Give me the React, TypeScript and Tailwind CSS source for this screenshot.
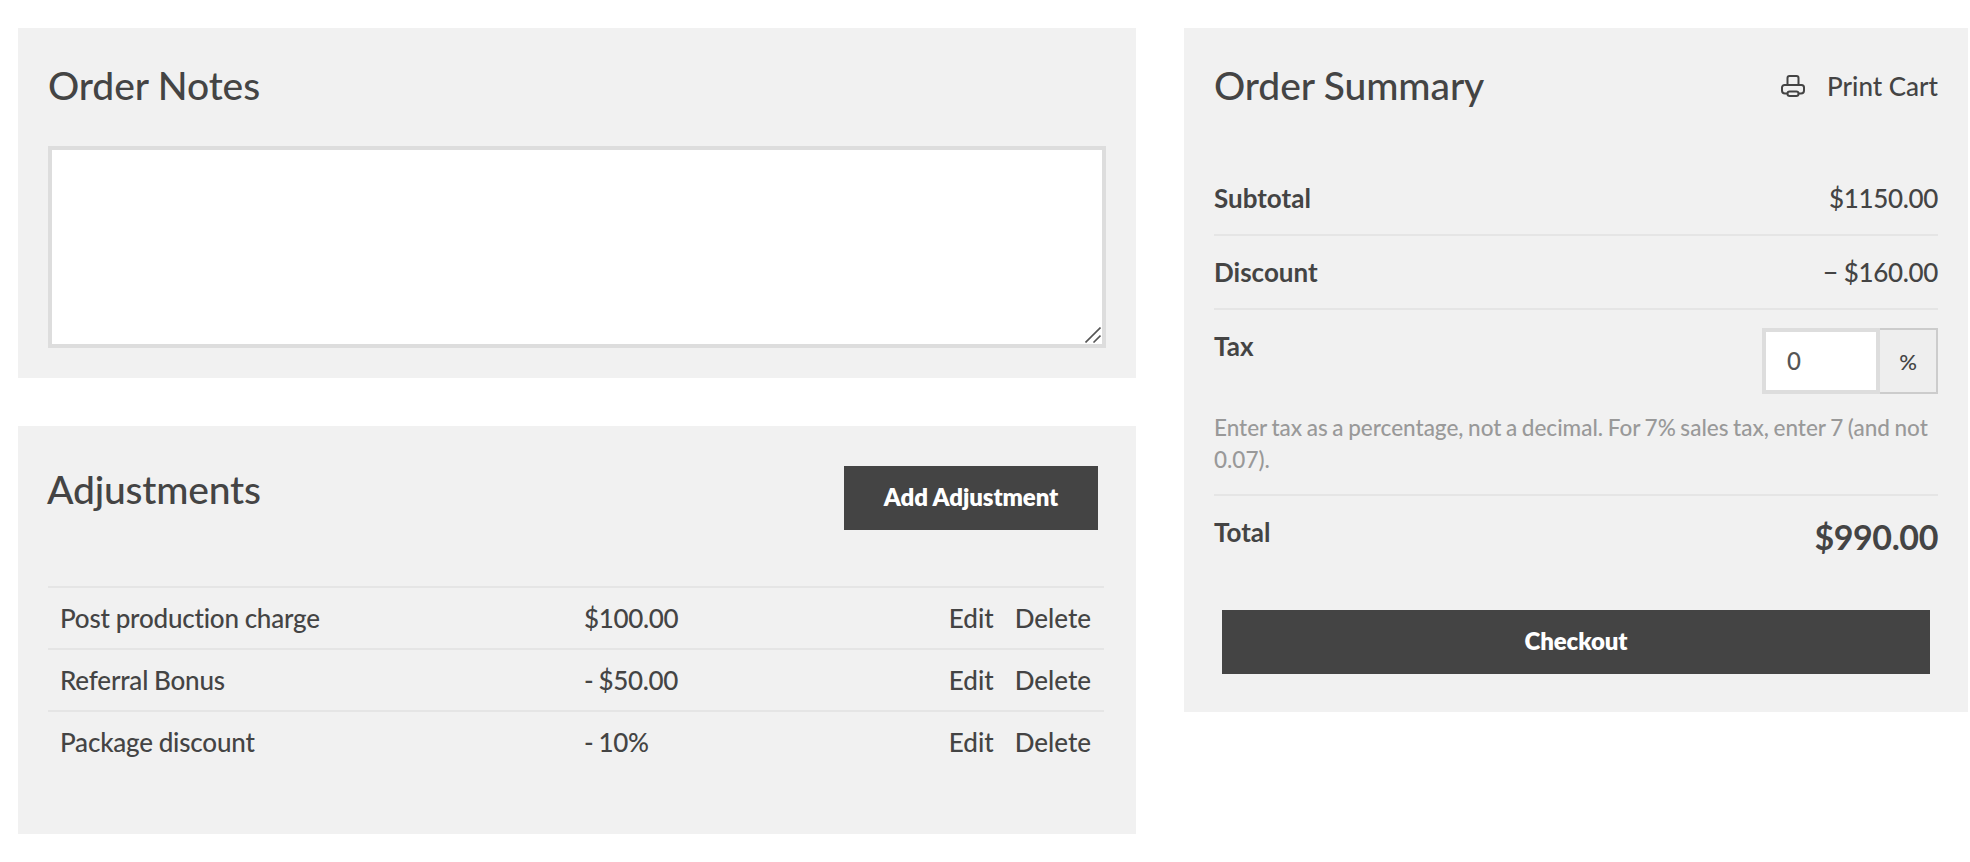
import { useState } from 'react';

const adjustments = [
  { id: 1, label: 'Post production charge', amount: '$100.00' },
  { id: 2, label: 'Referral Bonus', amount: '- $50.00' },
  { id: 3, label: 'Package discount', amount: '- 10%' },
];

function PrinterIcon() {
  return (
    <svg
      width="24"
      height="22"
      viewBox="0 0 24 22"
      fill="none"
      stroke="currentColor"
      strokeWidth="2"
      strokeLinejoin="round"
    >
      <path d="M6.5 10V3a2 2 0 0 1 2-2h7a2 2 0 0 1 2 2v7" />
      <path d="M6.5 18.5H4a3 3 0 0 1-3-3v-3A2.5 2.5 0 0 1 3.5 10h17a2.5 2.5 0 0 1 2.5 2.5v3a3 3 0 0 1-3 3h-2.5" />
      <rect x="6.5" y="16.5" width="11" height="4.5" rx="2.2" />
    </svg>
  );
}

function OrderNotes() {
  const [notes, setNotes] = useState('');

  return (
    <section className="h-[350px] bg-[#f1f1f1] px-[30px] pt-[29px]">
      <h2 className="text-[39px] leading-[56px] tracking-[-0.1px]">Order Notes</h2>
      <div className="relative mt-[33px] h-[202px]">
        <textarea
          value={notes}
          onChange={(e) => setNotes(e.target.value)}
          className="block h-full w-full resize-none border-4 border-[#ddd] bg-white p-5 outline-none"
        />
        <svg
          width="16"
          height="16"
          viewBox="0 0 16 16"
          className="absolute right-[5px] bottom-[5px]"
          stroke="#555"
          strokeWidth="1.6"
        >
          <path d="M.5 15.5 15.5.5M8.500 15.500l7-7" />
        </svg>
      </div>
    </section>
  );
}

function Adjustments() {
  return (
    <section className="h-[408px] bg-[#f1f1f1] pr-8 pl-[30px] pt-10">
      <div className="flex items-start justify-between pr-1.5">
        <h2 className="-mt-[5px] -ml-px text-[39px] leading-[56px] tracking-[-0.2px]">Adjustments</h2>
        <button
          type="button"
          className="h-16 w-[254px] bg-[#444] pb-[3px] text-[24px] font-extrabold tracking-[-0.1px] text-white"
        >
          Add Adjustment
        </button>
      </div>
      <div className="mt-14">
        {adjustments.map(({ id, label, amount }) => (
          <div key={id} className="flex h-[62px] items-center border-t-2 border-[#e5e5e5] px-3">
            <span className="w-[524px] tracking-[-0.2px] [word-spacing:-0.5px]">{label}</span>
            <span className="flex-1 tracking-[-0.35px] [word-spacing:-1px]">{amount}</span>
            <div className="flex gap-[21px] pr-px">
              <button type="button">Edit</button>
              <button type="button">Delete</button>
            </div>
          </div>
        ))}
      </div>
    </section>
  );
}

function OrderSummary() {
  const [tax, setTax] = useState('0');

  return (
    <section className="h-[684px] w-[784px] bg-[#f1f1f1] px-[30px] pt-[30px]">
      <div className="flex items-center justify-between">
        <h2 className="-mt-0.5 text-[39px] leading-[58px] tracking-[-0.1px]">Order Summary</h2>
        <button type="button" className="flex items-center gap-[22px]">
          <PrinterIcon />
          Print Cart
        </button>
      </div>
      <div className="mt-12">
        <div className="flex h-[74px] items-center justify-between border-b-2 border-[#e5e5e5]">
          <span className="font-bold">Subtotal</span>
          <span className="tracking-[-0.35px]">$1150.00</span>
        </div>
        <div className="flex h-[74px] items-center justify-between border-b-2 border-[#e5e5e5]">
          <span className="font-bold">Discount</span>
          <span className="tracking-[-0.35px]">− $160.00</span>
        </div>
        <div className="h-[186px] border-b-2 border-[#e5e5e5] pt-[18px]">
          <div className="flex justify-between">
            <label htmlFor="tax" className="font-bold">
              Tax
            </label>
            <div className="flex h-[66px]">
              <input
                id="tax"
                value={tax}
                onChange={(e) => setTax(e.target.value)}
                className="w-[118px] border-4 border-[#ddd] bg-white px-[21px] pb-0.5 text-[24px] text-[#555] outline-none"
              />
              <span className="flex w-[58px] items-center justify-center border-2 border-l-0 border-[#ccc] bg-[#eee] text-[22px]">
                %
              </span>
            </div>
          </div>
          <p className="mt-[18px] text-[22.5px] leading-8 text-[#999] [word-spacing:-1.1px]">
            Enter tax as a percentage, not a decimal. For 7% sales tax, enter 7 (and not 0.07).
          </p>
        </div>
        <div className="flex h-[114px] items-start justify-between pt-[18px]">
          <span className="font-bold">Total</span>
          <span className="text-[34px] leading-[46px] font-bold tracking-[-0.4px]">$990.00</span>
        </div>
      </div>
      <div className="px-2">
        <button
          type="button"
          className="h-16 w-full bg-[#444] pb-[3px] text-[24px] font-extrabold tracking-[-0.1px] text-white"
        >
          Checkout
        </button>
      </div>
    </section>
  );
}

export default function App() {
  return (
    <main className="flex h-[862px] w-[1970px] items-start gap-12 bg-white pt-7 pl-[18px] font-['Lato',sans-serif] text-[26px] leading-[37px] font-medium text-[#444] [font-variant-ligatures:none]">
      <div className="flex w-[1118px] flex-col gap-12">
        <OrderNotes />
        <Adjustments />
      </div>
      <OrderSummary />
    </main>
  );
}
